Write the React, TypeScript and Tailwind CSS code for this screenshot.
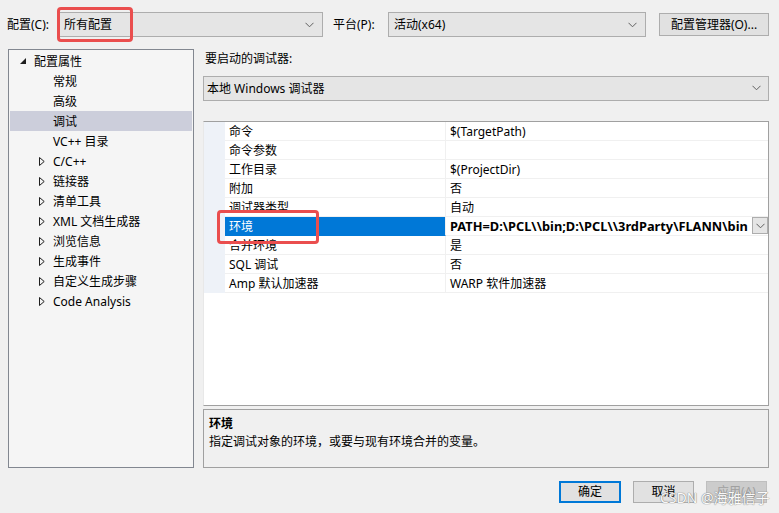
import React from "react";

const font = "font-['Noto_Sans','Noto_Sans_CJK_SC',sans-serif]";

function Chevron({ className = "" }: { className?: string }) {
  return (
    <svg width="9" height="6" viewBox="0 0 9 6" className={className}>
      <path d="M0.5 0.8 L4.5 4.8 L8.5 0.8" fill="none" stroke="#606060" strokeWidth="1" />
    </svg>
  );
}

function Combo({ w, text }: { w: string; text: string }) {
  return (
    <div className={`${w} h-[25px] border border-[#adadad] bg-[#e5e5e5] flex items-center pl-[5px] pr-[8px]`}>
      <span className="flex-1 text-[12px] text-black whitespace-nowrap pt-[1px]">{text}</span>
      <Chevron />
    </div>
  );
}

const tree: { label: string; level: 0 | 1; arrow?: "open" | "closed"; selected?: boolean }[] = [
  { label: "配置属性", level: 0, arrow: "open" },
  { label: "常规", level: 1 },
  { label: "高级", level: 1 },
  { label: "调试", level: 1, selected: true },
  { label: "VC++ 目录", level: 1 },
  { label: "C/C++", level: 1, arrow: "closed" },
  { label: "链接器", level: 1, arrow: "closed" },
  { label: "清单工具", level: 1, arrow: "closed" },
  { label: "XML 文档生成器", level: 1, arrow: "closed" },
  { label: "浏览信息", level: 1, arrow: "closed" },
  { label: "生成事件", level: 1, arrow: "closed" },
  { label: "自定义生成步骤", level: 1, arrow: "closed" },
  { label: "Code Analysis", level: 1, arrow: "closed" },
];

const rows: { name: string; value: string; selected?: boolean }[] = [
  { name: "命令", value: "$(TargetPath)" },
  { name: "命令参数", value: "" },
  { name: "工作目录", value: "$(ProjectDir)" },
  { name: "附加", value: "否" },
  { name: "调试器类型", value: "自动" },
  { name: "环境", value: "PATH=D:\\PCL\\\\bin;D:\\PCL\\\\3rdParty\\FLANN\\bin", selected: true },
  { name: "合并环境", value: "是" },
  { name: "SQL 调试", value: "否" },
  { name: "Amp 默认加速器", value: "WARP 软件加速器" },
];

export default function App() {
  return (
    <div className={`relative w-[779px] h-[513px] bg-[#f0f0f0] overflow-hidden text-[12px] text-black ${font}`}>
      {/* top bar */}
      <div className="flex items-center pt-[12px] h-[37px]">
        <span className="ml-[7px] w-[51px] pt-[1px]">配置(C):</span>
        <Combo w="w-[265px]" text="所有配置" />
        <span className="ml-[10px] w-[55px] pt-[1px]">平台(P):</span>
        <Combo w="w-[258px]" text="活动(x64)" />
        <div className="ml-[13px] w-[110px] h-[23px] border border-[#adadad] bg-[#e1e1e1] flex items-center justify-center pt-[1px]">
          配置管理器(O)...
        </div>
      </div>

      {/* body */}
      <div className="flex mt-[12px] h-[419px]">
        {/* tree */}
        <div className="ml-[8px] w-[186px] h-full border border-[#828790] bg-[#f5f5f5] pt-[1px] px-[1px]">
          {tree.map((t) => (
            <div
              key={t.label}
              className={`h-[20px] flex items-center whitespace-nowrap ${t.selected ? "bg-[#cccedb]" : ""}`}
            >
              {t.level === 0 ? (
                <>
                  <svg width="6" height="6" viewBox="0 0 6 6" className="ml-[10px] mr-[8px]">
                    <path d="M6 0 L6 6 L0 6 Z" fill="#1e1e1e" />
                  </svg>
                  <span className="pt-[1px]">{t.label}</span>
                </>
              ) : (
                <>
                  {t.arrow === "closed" ? (
                    <svg width="6" height="9" viewBox="0 0 6 9" className="ml-[29px] mr-[8px]">
                      <path d="M0.5 0.5 L5.2 4.5 L0.5 8.5 Z" fill="none" stroke="#1e1e1e" strokeWidth="1" />
                    </svg>
                  ) : (
                    <span className="ml-[43px]" />
                  )}
                  <span className="pt-[1px]">{t.label}</span>
                </>
              )}
            </div>
          ))}
        </div>

        {/* right column */}
        <div className="ml-[9px] w-[566px] flex flex-col">
          <div className="h-[18px] flex items-center ml-[2px] mt-[1px]">要启动的调试器:</div>
          <div className="mt-[8px] h-[25px] border border-[#adadad] bg-[#e5e5e5] flex items-center pl-[3px] pr-[7px]">
            <span className="flex-1 pt-[1px]">本地 Windows 调试器</span>
            <Chevron />
          </div>

          {/* grid */}
          <div className="mt-[20px] h-[287px] border border-[#a0a0a0] border-l-[#e8e8e8] bg-white flex flex-col">
            <div className="flex flex-col">
              {rows.map((r) => (
                <div key={r.name} className="flex h-[19px]">
                  <div className="w-[21px] bg-[#eef2f8]" />
                  <div
                    className={`w-[221px] border-b border-r border-[#f0f0f0] flex items-center pl-[4px] pt-[2px] whitespace-nowrap ${
                      r.selected ? "bg-[#0078d7] text-white border-b-[#0078d7]" : ""
                    }`}
                  >
                    {r.name}
                  </div>
                  <div className="flex-1 min-w-0 border-b border-[#f0f0f0] flex items-center">
                    <span
                      className={`flex-1 min-w-0 overflow-hidden whitespace-nowrap pl-[4px] pt-[2px] ${
                        r.selected ? "font-bold text-[12.8px]" : ""
                      }`}
                    >
                      {r.value}
                    </span>
                    {r.selected && (
                      <div className="w-[16px] h-[17px] border border-[#adadad] bg-[#e5e5e5] flex items-center justify-center shrink-0">
                        <Chevron />
                      </div>
                    )}
                  </div>
                </div>
              ))}
            </div>
          </div>

          {/* description */}
          <div className="mt-[3px] h-[59px] border border-[#a0a0a0] pl-[5px] pt-[5px]">
            <div className="font-bold leading-[18px]">环境</div>
            <div className="leading-[18px]">指定调试对象的环境，或要与现有环境合并的变量。</div>
          </div>
        </div>
      </div>

      {/* buttons */}
      <div className="flex mt-[13px] ml-[559px] gap-[12px]">
        <div className="w-[62px] h-[22px] border-2 border-[#0078d7] bg-[#e1e1e1] flex items-center justify-center">确定</div>
        <div className="w-[61px] h-[22px] border border-[#adadad] bg-[#e1e1e1] flex items-center justify-center">取消</div>
        <div className="w-[61px] h-[22px] border border-[#bfbfbf] bg-[#cccccc] text-[#a0a0a0] flex items-center justify-center">应用(A)</div>
      </div>

      {/* watermark */}
      <span className="absolute left-[660px] top-[489px] text-[14px] leading-[18px] text-white [text-shadow:0_0_1px_#707070,0_0_1px_#707070] opacity-90 whitespace-nowrap">
        CSDN @海雅信子
      </span>

      {/* red annotation boxes */}
      <div className="absolute left-[57px] top-[7px] w-[76px] h-[35px] border-[3px] border-[#ea4e4e] rounded-[4px]" />
      <div className="absolute left-[217px] top-[210px] w-[102px] h-[34px] border-[3px] border-[#ea4e4e] rounded-[4px]" />
    </div>
  );
}
